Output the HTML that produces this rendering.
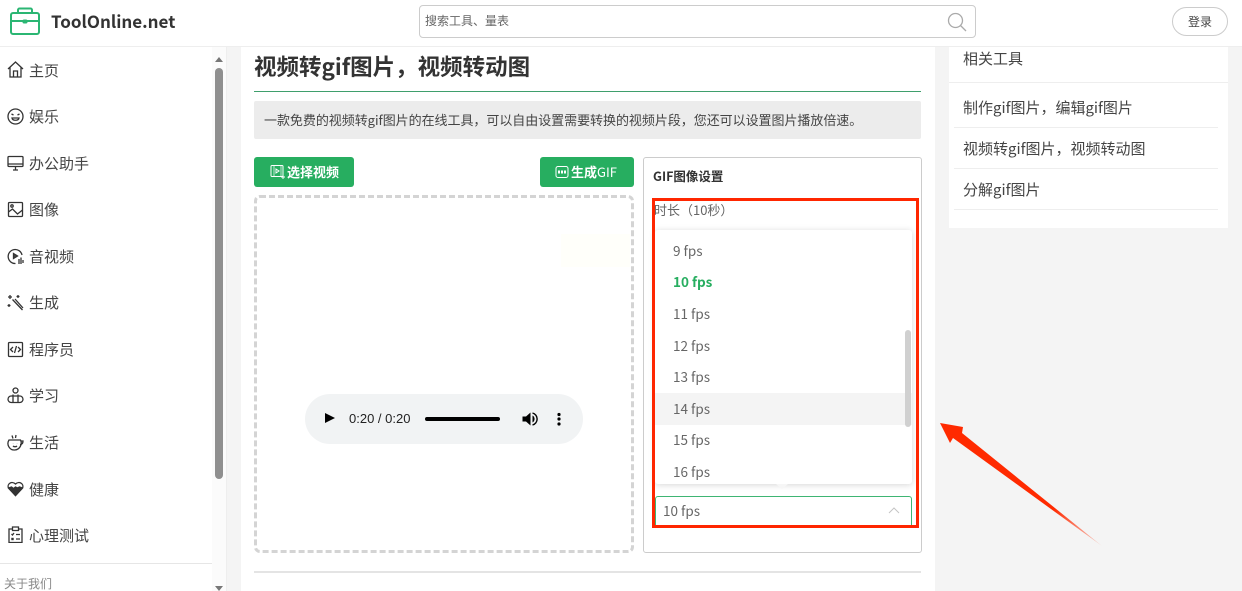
<!DOCTYPE html>
<html lang="zh"><head><meta charset="utf-8"><title>视频转gif图片</title>
<style>
html,body{margin:0;padding:0;width:1242px;height:591px;overflow:hidden;background:#f4f4f4}
body{font-family:"Noto Sans CJK SC","Liberation Sans",sans-serif;color:#333;position:relative}
.a{position:absolute;white-space:nowrap}
.nav{position:absolute;left:29px;font-size:15px;line-height:20px;color:#444;white-space:nowrap}
.ic{position:absolute;left:7px;width:17px;height:17px;fill:none;stroke:#333;stroke-width:1.3}
.o{position:absolute;left:673px;font-size:13.5px;line-height:20px;color:#666;white-space:nowrap}
.r{position:absolute;left:963px;font-size:15px;line-height:20px;color:#444;white-space:nowrap}
.l{position:absolute;left:954px;width:264px;height:1px;background:#eee}
</style></head><body>
<!-- panels -->
<div class="a" style="left:0;top:47px;width:227px;height:544px;background:#fff"></div>
<div class="a" style="left:241px;top:47px;width:694px;height:544px;background:#fff"></div>
<div class="a" style="left:949px;top:47px;width:279px;height:181px;background:#fff"></div>
<!-- header -->
<div class="a" style="left:0;top:0;width:1242px;height:46px;background:#fff;border-bottom:1px solid #eee"></div>
<svg class="a" style="left:9px;top:7px" width="32" height="29" viewBox="0 0 32 29" fill="none" stroke="#2bb673" stroke-width="2"><rect x="2" y="6" width="28" height="21" rx="2"/><path d="M9 6V3a1.500 1.500 0 0 1 1.500-1.500h11A1.500 1.500 0 0 1 23 3v3M2 14h28"/><rect x="14" y="13" width="4" height="3" rx="1" fill="#2bb673" stroke-width="1"/></svg>
<div class="a" style="left:51px;top:9px;font-size:17px;line-height:24px;font-weight:700;color:#333">ToolOnline.net</div>
<div class="a" style="left:419px;top:5px;width:555px;height:31px;border:1px solid #ccc;border-radius:4px;background:#fff"></div>
<div class="a" style="left:425px;top:12px;font-size:12px;line-height:18px;color:#666">搜索工具、量表</div>
<svg class="a" style="left:946px;top:11px" width="22" height="22" fill="none" stroke="#aaa" stroke-width="1.300"><circle cx="9.500" cy="9.500" r="7"/><path d="M14.500 14.500l5.500 5.500"/></svg>
<div class="a" style="left:1172px;top:7px;width:54px;height:27px;border:1px solid #ccc;border-radius:15px;text-align:center;font-size:12px;line-height:28px;color:#444">登录</div>
<!-- sidebar -->
<svg class="ic" style="top:61px" viewBox="0 0 17 17"><path d="M1 8l7.500-7L16 8M3 6.500V16h11V6.500M6.500 16v-6h4v6"/></svg><div class="nav" style="top:61px">主页</div>
<svg class="ic" style="top:108px" viewBox="0 0 17 17"><circle cx="8.500" cy="8.500" r="7.500"/><path d="M4.500 6l2 1M12.500 6l-2 1M5 10h7c-.5 3-6.500 3-7 0z"/></svg><div class="nav" style="top:107px">娱乐</div>
<svg class="ic" style="top:155px" viewBox="0 0 17 17"><rect x="1" y="1.500" width="15" height="10" rx="1"/><path d="M1 9h15M6 15h5M8.500 11.500V15"/></svg><div class="nav" style="top:154px">办公助手</div>
<svg class="ic" style="top:201px" viewBox="0 0 17 17"><rect x="1.500" y="1.500" width="14" height="14" rx="1"/><circle cx="5" cy="5" r="1.200"/><path d="M1.500 11l4-3 5 5 5-4"/></svg><div class="nav" style="top:200px">图像</div>
<svg class="ic" style="top:248px" viewBox="0 0 17 17"><path d="M15 7A7 7 0 1 0 8.500 15.500"/><path d="M6.500 5.500v5l4-2.500z" fill="#444"/><path d="M12 11v5M14 9.500v6.500M16 12v3"/></svg><div class="nav" style="top:247px">音视频</div>
<svg class="ic" style="top:294px" viewBox="0 0 17 17"><path d="M5.500 5.500L15.500 16M8 5L16 14" /><path d="M3 1v4M1 3h4M11 1v3M9.500 2.500h3M2 10v3M.5 11.500h3"/></svg><div class="nav" style="top:293px">生成</div>
<svg class="ic" style="top:341px" viewBox="0 0 17 17"><rect x="1.500" y="1.500" width="14" height="14" rx="1"/><path d="M6 6L3.500 8.500 6 11M11 6l2.500 2.500L11 11M9.500 5l-2 7"/></svg><div class="nav" style="top:340px">程序员</div>
<svg class="ic" style="top:387px" viewBox="0 0 17 17"><circle cx="8.500" cy="3.500" r="2.500"/><rect x="1" y="9" width="15" height="6.500" rx="3.200"/><path d="M6 7.500V15.500M11 7.500V15.500"/></svg><div class="nav" style="top:386px">学习</div>
<svg class="ic" style="top:434px" viewBox="0 0 17 17"><path d="M2 6h11.500a7 7 0 0 1-5.700 10A6.500 6.500 0 0 1 2 6zM13.500 7h2.500c0 2.500-1 3.500-3 3.500M5 1.500l1 3M9 1l-.5 3M6 9.500l.1.1M10 9.500l.1.1M6 12c1 1 3 1 4 0"/></svg><div class="nav" style="top:433px">生活</div>
<svg class="ic" style="top:480px" viewBox="0 0 17 17"><path d="M8.500 15.500L1.500 8C-.5 4 5 .5 8.500 4 12 .5 17.500 4 15.500 8z"/><path d="M1.500 8l3-1 2 1.500 2-1.500 2 1 2-1 3 1-7 7.500z" fill="#333"/></svg><div class="nav" style="top:480px">健康</div>
<svg class="ic" style="top:526px" viewBox="0 0 17 17"><path d="M5 3H2v13.500h13V3h-3M5.500 1h6v3.500h-6zM4.500 8l1 1 1.500-2M9 8.500h4M4.500 12l2 2M6.500 12l-2 2M9 13h4"/></svg><div class="nav" style="top:526px">心理测试</div>
<div class="a" style="left:0;top:563px;width:212px;height:1px;background:#e6e6e6"></div>
<div class="a" style="left:4px;top:576px;font-size:12px;line-height:16px;color:#888">关于我们</div>
<!-- sidebar scrollbar -->
<div class="a" style="left:212px;top:47px;width:14px;height:544px;background:#fbfbfb"></div>
<div class="a" style="left:226px;top:47px;width:1px;height:544px;background:#eee"></div>
<div class="a" style="left:215px;top:68px;width:8px;height:411px;background:#8f8f8f;border-radius:4px"></div>
<div class="a" style="left:215px;top:57px;width:0;height:0;border:4px solid transparent;border-top:0;border-bottom:5px solid #777"></div>
<div class="a" style="left:215px;top:586px;width:0;height:0;border:4px solid transparent;border-bottom:0;border-top:5px solid #777"></div>
<!-- title -->
<div class="a" style="left:254px;top:50px;font-size:22.5px;line-height:32px;font-weight:700;color:#333">视频转gif图片，视频转动图</div>
<div class="a" style="left:254px;top:91px;width:667px;height:1px;background:#3f9f6c"></div>
<div class="a" style="left:254px;top:101px;width:667px;height:38px;background:#ececec;border-radius:2px"></div>
<div class="a" style="left:264px;top:111px;font-size:13px;letter-spacing:-.04px;line-height:18px;color:#444">一款免费的视频转gif图片的在线工具，可以自由设置需要转换的视频片段，您还可以设置图片播放倍速。</div>
<!-- buttons -->
<div class="a" style="left:254px;top:157px;width:100px;height:30px;background:#27ae60;border-radius:3px"></div>
<svg class="a" style="left:270px;top:164px" width="16" height="16" fill="none" stroke="#fff"><rect x="1" y="1.500" width="12" height="11" rx="1"/><path d="M4 1.500v11M11 1.500v11" opacity=".7"/><path d="M6 5v4l3-2z"/><path d="M13 11v4M11 13h4"/></svg>
<div class="a" style="left:287px;top:163px;font-size:13px;line-height:18px;font-weight:700;color:#fff">选择视频</div>
<div class="a" style="left:540px;top:157px;width:94px;height:30px;background:#27ae60;border-radius:3px"></div>
<svg class="a" style="left:555px;top:165px" width="14" height="14" fill="none" stroke="#fff"><rect x="1" y="1.500" width="12" height="11" rx="2"/><path d="M3 7h8" stroke-width="3" stroke-dasharray="2 1"/></svg>
<div class="a" style="left:571px;top:163px;font-size:13px;line-height:18px;color:#fff"><b>生成</b>GIF</div>
<!-- video area -->
<div class="a" style="left:254px;top:195px;width:374px;height:352px;border:3px dashed #d4d4d4;border-radius:6px"></div>
<div class="a" style="left:561px;top:234px;width:69px;height:33px;background:#fffffa"></div>
<div class="a" style="left:305px;top:394px;width:278px;height:50px;border-radius:25px;background:#f1f3f4"></div>
<div class="a" style="left:325px;top:413px;width:0;height:0;border-left:10px solid #000;border-top:5.500px solid transparent;border-bottom:5.500px solid transparent"></div>
<div class="a" style="left:349px;top:410px;font-family:'Liberation Sans',sans-serif;font-size:13px;line-height:17px;color:#222">0:20 / 0:20</div>
<div class="a" style="left:425px;top:417px;width:75px;height:4px;background:#000;border-radius:2px"></div>
<svg class="a" style="left:521px;top:410px" width="18" height="18"><path d="M1.500 6.500h3.500L9.500 2.500v13L5 11.500H1.500z" fill="#000"/><path d="M11.500 5.500a4 4 0 0 1 0 7z" fill="#000"/><path d="M11.500 3a6.200 6.200 0 0 1 0 12" fill="none" stroke="#000" stroke-width="1.400"/></svg>
<svg class="a" style="left:556px;top:412px" width="6" height="15" fill="#000"><circle cx="3" cy="2.500" r="1.600"/><circle cx="3" cy="7" r="1.600"/><circle cx="3" cy="12" r="1.600"/></svg>
<!-- settings panel -->
<div class="a" style="left:643px;top:157px;width:277px;height:394px;border:1px solid #ccc;border-radius:3px;background:#fff"></div>
<div class="a" style="left:653px;top:167px;font-size:12.500px;line-height:18px;font-weight:700;color:#333">GIF图像设置</div>
<div class="a" style="left:654px;top:201px;font-size:13px;line-height:18px;color:#666">时长（10秒）</div>
<!-- dropdown -->
<div class="a" style="left:655px;top:230px;width:257px;height:254px;background:#fff;border-radius:3px;box-shadow:0 1px 7px rgba(0,0,0,.16)"></div>
<div class="a" style="left:655px;top:393px;width:257px;height:32px;background:#f4f4f4"></div>
<div class="o" style="top:240px">9 fps</div>
<div class="o" style="top:271px;font-weight:700;color:#27ae60">10 fps</div>
<div class="o" style="top:303px">11 fps</div>
<div class="o" style="top:335px">12 fps</div>
<div class="o" style="top:366px">13 fps</div>
<div class="o" style="top:398px">14 fps</div>
<div class="o" style="top:429px">15 fps</div>
<div class="o" style="top:461px">16 fps</div>
<div class="a" style="left:905px;top:330px;width:6px;height:97px;background:#d0d0d0;border-radius:3px"></div>
<div class="a" style="left:776px;top:484px;width:0;height:0;border:6px solid transparent;border-bottom:0;border-top:5px solid #f6f6f6"></div>
<!-- select -->
<div class="a" style="left:655px;top:496px;width:255px;height:29px;border:1px solid #3fb573;border-radius:3px 3px 0 0;background:#fff"></div>
<div class="a" style="left:663px;top:500px;font-size:13.500px;line-height:20px;color:#666">10 fps</div>
<svg class="a" style="left:888px;top:506px" width="12" height="9" fill="none" stroke="#c4c4c4"><path d="M1 7l5-5 5 5"/></svg>
<!-- annotation -->
<div class="a" style="left:652px;top:198px;width:261px;height:324px;border:3px solid #ff2600"></div>
<svg class="a" style="left:935px;top:415px" width="175" height="140"><defs><linearGradient id="g" x1="0" y1="0" x2="1" y2="1"><stop offset=".7" stop-color="#ff2a00"/><stop offset="1" stop-color="#ff2a00" stop-opacity=".15"/></linearGradient></defs><path d="M5 8L28 12 27 18 167 131 18 23 15 28z" fill="url(#g)"/></svg>
<div class="a" style="left:254px;top:571px;width:667px;height:2px;background:#e4e4e4"></div>
<!-- right panel -->
<div class="r" style="top:49px">相关工具</div>
<div class="a" style="left:949px;top:82px;width:279px;height:1px;background:#eee"></div>
<div class="r" style="top:98px">制作gif图片，编辑gif图片</div><div class="l" style="top:127px"></div>
<div class="r" style="top:139px">视频转gif图片，视频转动图</div><div class="l" style="top:168px"></div>
<div class="r" style="top:180px">分解gif图片</div><div class="l" style="top:209px"></div>
</body></html>
